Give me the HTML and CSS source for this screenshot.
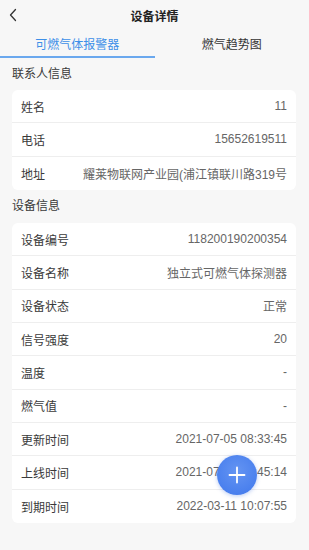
FILE: index.html
```html
<!DOCTYPE html>
<html lang="zh">
<head>
<meta charset="utf-8">
<title>设备详情</title>
<link rel="stylesheet" href="styles.css">
</head>
<body>
<div class="page">
  <header class="nav">
    <svg class="back" width="12" height="14" viewBox="0 0 12 14"><path d="M6.5 1.5 L1.5 7 L6.5 12.5" fill="none" stroke="#333" stroke-width="1.3" stroke-linecap="round" stroke-linejoin="round"/></svg>
    <div class="title">设备详情</div>
  </header>
  <nav class="tabs">
    <div class="tab active">可燃气体报警器</div>
    <div class="tab">燃气趋势图</div>
  </nav>

  <div class="section-title">联系人信息</div>
  <div class="card">
    <div class="row"><span class="label">姓名</span><span class="value">11</span></div>
    <div class="row"><span class="label">电话</span><span class="value">15652619511</span></div>
    <div class="row"><span class="label">地址</span><span class="value">耀莱物联网产业园(浦江镇联川路319号</span></div>
  </div>

  <div class="section-title">设备信息</div>
  <div class="card">
    <div class="row"><span class="label">设备编号</span><span class="value">118200190200354</span></div>
    <div class="row"><span class="label">设备名称</span><span class="value">独立式可燃气体探测器</span></div>
    <div class="row"><span class="label">设备状态</span><span class="value">正常</span></div>
    <div class="row"><span class="label">信号强度</span><span class="value">20</span></div>
    <div class="row"><span class="label">温度</span><span class="value">-</span></div>
    <div class="row"><span class="label">燃气值</span><span class="value">-</span></div>
    <div class="row"><span class="label">更新时间</span><span class="value">2021-07-05 08:33:45</span></div>
    <div class="row"><span class="label">上线时间</span><span class="value">2021-07-05 21:45:14</span></div>
    <div class="row"><span class="label">到期时间</span><span class="value">2022-03-11 10:07:55</span></div>
  </div>

  <button class="fab" aria-label="添加">
    <svg width="20" height="20" viewBox="0 0 20 20"><path d="M10 2.5 V17.5 M2.5 10 H17.5" stroke="#fff" stroke-width="1.8" stroke-linecap="round"/></svg>
  </button>
</div>
</body>
</html>
```

FILE: styles.css
```css
html, body {
  margin: 0;
  padding: 0;
  background: #f7f7f7;
}
body {
  font-family: "Liberation Sans", "Noto Sans CJK SC", sans-serif;
  font-size: 12px;
  color: #333;
}
.page {
  position: relative;
  width: 309px;
  min-height: 550px;
}
.nav {
  position: relative;
  height: 30px;
  display: flex;
  align-items: center;
  justify-content: center;
}
.back {
  position: absolute;
  left: 9px;
  top: 8px;
}
.title {
  font-size: 12px;
  font-weight: bold;
  color: #222;
}
.tabs {
  display: flex;
  height: 28px;
}
.tab {
  flex: 1;
  display: flex;
  align-items: center;
  justify-content: center;
  color: #333;
  box-sizing: border-box;
  padding-bottom: 2px;
}
.tab.active {
  color: #3d8fe8;
  border-bottom: 2px solid #6aa8ee;
  padding-bottom: 0;
}
.section-title {
  height: 32px;
  line-height: 32px;
  padding-left: 12px;
  color: #3a3a3a;
}
.card {
  margin: 0 13px 0 12px;
  background: #fff;
  border-radius: 6px;
}
.section-title + .card + .section-title {
  height: 33px;
  line-height: 33px;
}
.row {
  height: 33.33px;
  box-sizing: border-box;
  display: flex;
  align-items: center;
  justify-content: space-between;
  padding: 0 9px 0 9px;
  border-bottom: 1px solid #eeeeee;
}
.row:last-child {
  border-bottom: none;
}
.label {
  color: #3a3a3a;
}
.value {
  color: #666;
  white-space: nowrap;
}
.fab {
  position: absolute;
  left: 217px;
  top: 455px;
  width: 40px;
  height: 40px;
  border: none;
  padding: 0;
  border-radius: 50%;
  background: radial-gradient(circle at 50% 40%, #6494f2 0%, #4a80ee 70%, #3f76e8 100%);
  box-shadow: 0 1px 4px rgba(60, 110, 220, 0.35);
  display: flex;
  align-items: center;
  justify-content: center;
}
```
